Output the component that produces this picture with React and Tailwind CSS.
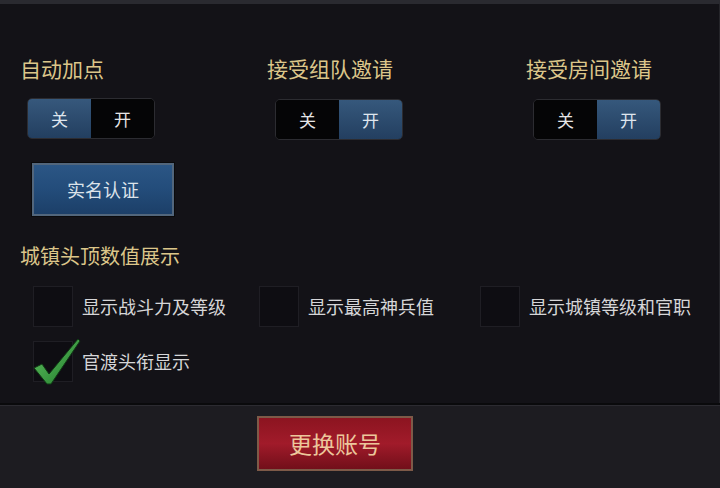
import React from 'react';

const font = { fontFamily: '"Noto Sans CJK SC", "Noto Sans", sans-serif' };

function Toggle({ on }) {
  const active = 'bg-gradient-to-b from-[#36587c] to-[#233f60] text-[#dfe6ee]';
  const idle = 'bg-[#050506] text-[#e6e6e6]';
  return (
    <div className="flex h-[41px] w-[128px] rounded-[5px] border border-[#2c2c31] overflow-hidden">
      <div className={`flex-1 flex items-center justify-center text-[17px] ${on ? idle : active}`}>关</div>
      <div className={`flex-1 flex items-center justify-center text-[17px] ${on ? active : idle}`}>开</div>
    </div>
  );
}

function Check({ checked, label }) {
  return (
    <div className="flex items-center">
      <div className="relative shrink-0 w-[40px] h-[41px] bg-[#0e0d12] border border-[#1f1e24]">
        {checked && (
          <svg className="absolute left-[-2px] top-[-8px]" width="50" height="52" viewBox="0 0 50 52">
            <defs>
              <linearGradient id="g" x1="0" y1="0" x2="1" y2="1">
                <stop offset="0" stopColor="#62c262" />
                <stop offset="1" stopColor="#1f7a2a" />
              </linearGradient>
            </defs>
            <path d="M2 34 L10 30 L17 40 L46 5 L48 7 L19 50 L15 50 Z" fill="url(#g)" stroke="#0f3a14" strokeWidth="1" />
          </svg>
        )}
      </div>
      <span className="ml-[9px] text-[18px] whitespace-nowrap text-[#d6d6d8]">{label}</span>
    </div>
  );
}

export default function App() {
  return (
    <div style={font} className="w-[720px] h-[488px] bg-[#1d1c21] flex flex-col overflow-hidden">
      <div className="h-[4px] bg-[#2a2a30]" />
      <div className="h-[399px] bg-[#131217] border-r border-[#25252a] flex flex-col">
        <div className="flex pt-[49px]">
          <div className="w-[267px] shrink-0 pl-[20px]">
            <div className="text-[21px] leading-[30px] text-[#dcc68a]">自动加点</div>
            <div className="mt-[15px] ml-[7px]"><Toggle on={false} /></div>
          </div>
          <div className="w-[259px] shrink-0">
            <div className="text-[21px] leading-[30px] text-[#dcc68a]">接受组队邀请</div>
            <div className="mt-[16px] ml-[8px]"><Toggle on /></div>
          </div>
          <div className="flex-1">
            <div className="text-[21px] leading-[30px] text-[#dcc68a]">接受房间邀请</div>
            <div className="mt-[16px] ml-[7px]"><Toggle on /></div>
          </div>
        </div>
        <div className="pl-[32px] mt-[23px]">
          <button className="w-[142px] h-[53px] border-2 border-[#52667c] bg-gradient-to-b from-[#2b5685] via-[#234c7a] to-[#1c3f68] shadow-[0_0_0_1px_#0a0a0c] text-[18px] text-[#dde3ea]">
            实名认证
          </button>
        </div>
        <div className="pl-[20px] mt-[26px] text-[20px] leading-[28px] text-[#dcc68a]">城镇头顶数值展示</div>
        <div className="flex mt-[16px]">
          <div className="w-[259px] shrink-0 pl-[33px]"><Check label="显示战斗力及等级" /></div>
          <div className="w-[221px] shrink-0"><Check label="显示最高神兵值" /></div>
          <div className="flex-1"><Check label="显示城镇等级和官职" /></div>
        </div>
        <div className="pl-[33px] mt-[14px]"><Check checked label="官渡头衔显示" /></div>
      </div>
      <div className="h-[2px] bg-[#0a0a0c]" />
      <div className="flex-1 flex justify-center pt-[10px] border-t border-[#2c2b31]">
        <button className="ml-[-50px] w-[156px] h-[55px] border-2 border-[#7d5a48] bg-gradient-to-b from-[#8c1420] via-[#a11b2a] to-[#720f1a] text-[23px] text-[#ecc79c]">
          更换账号
        </button>
      </div>
    </div>
  );
}
